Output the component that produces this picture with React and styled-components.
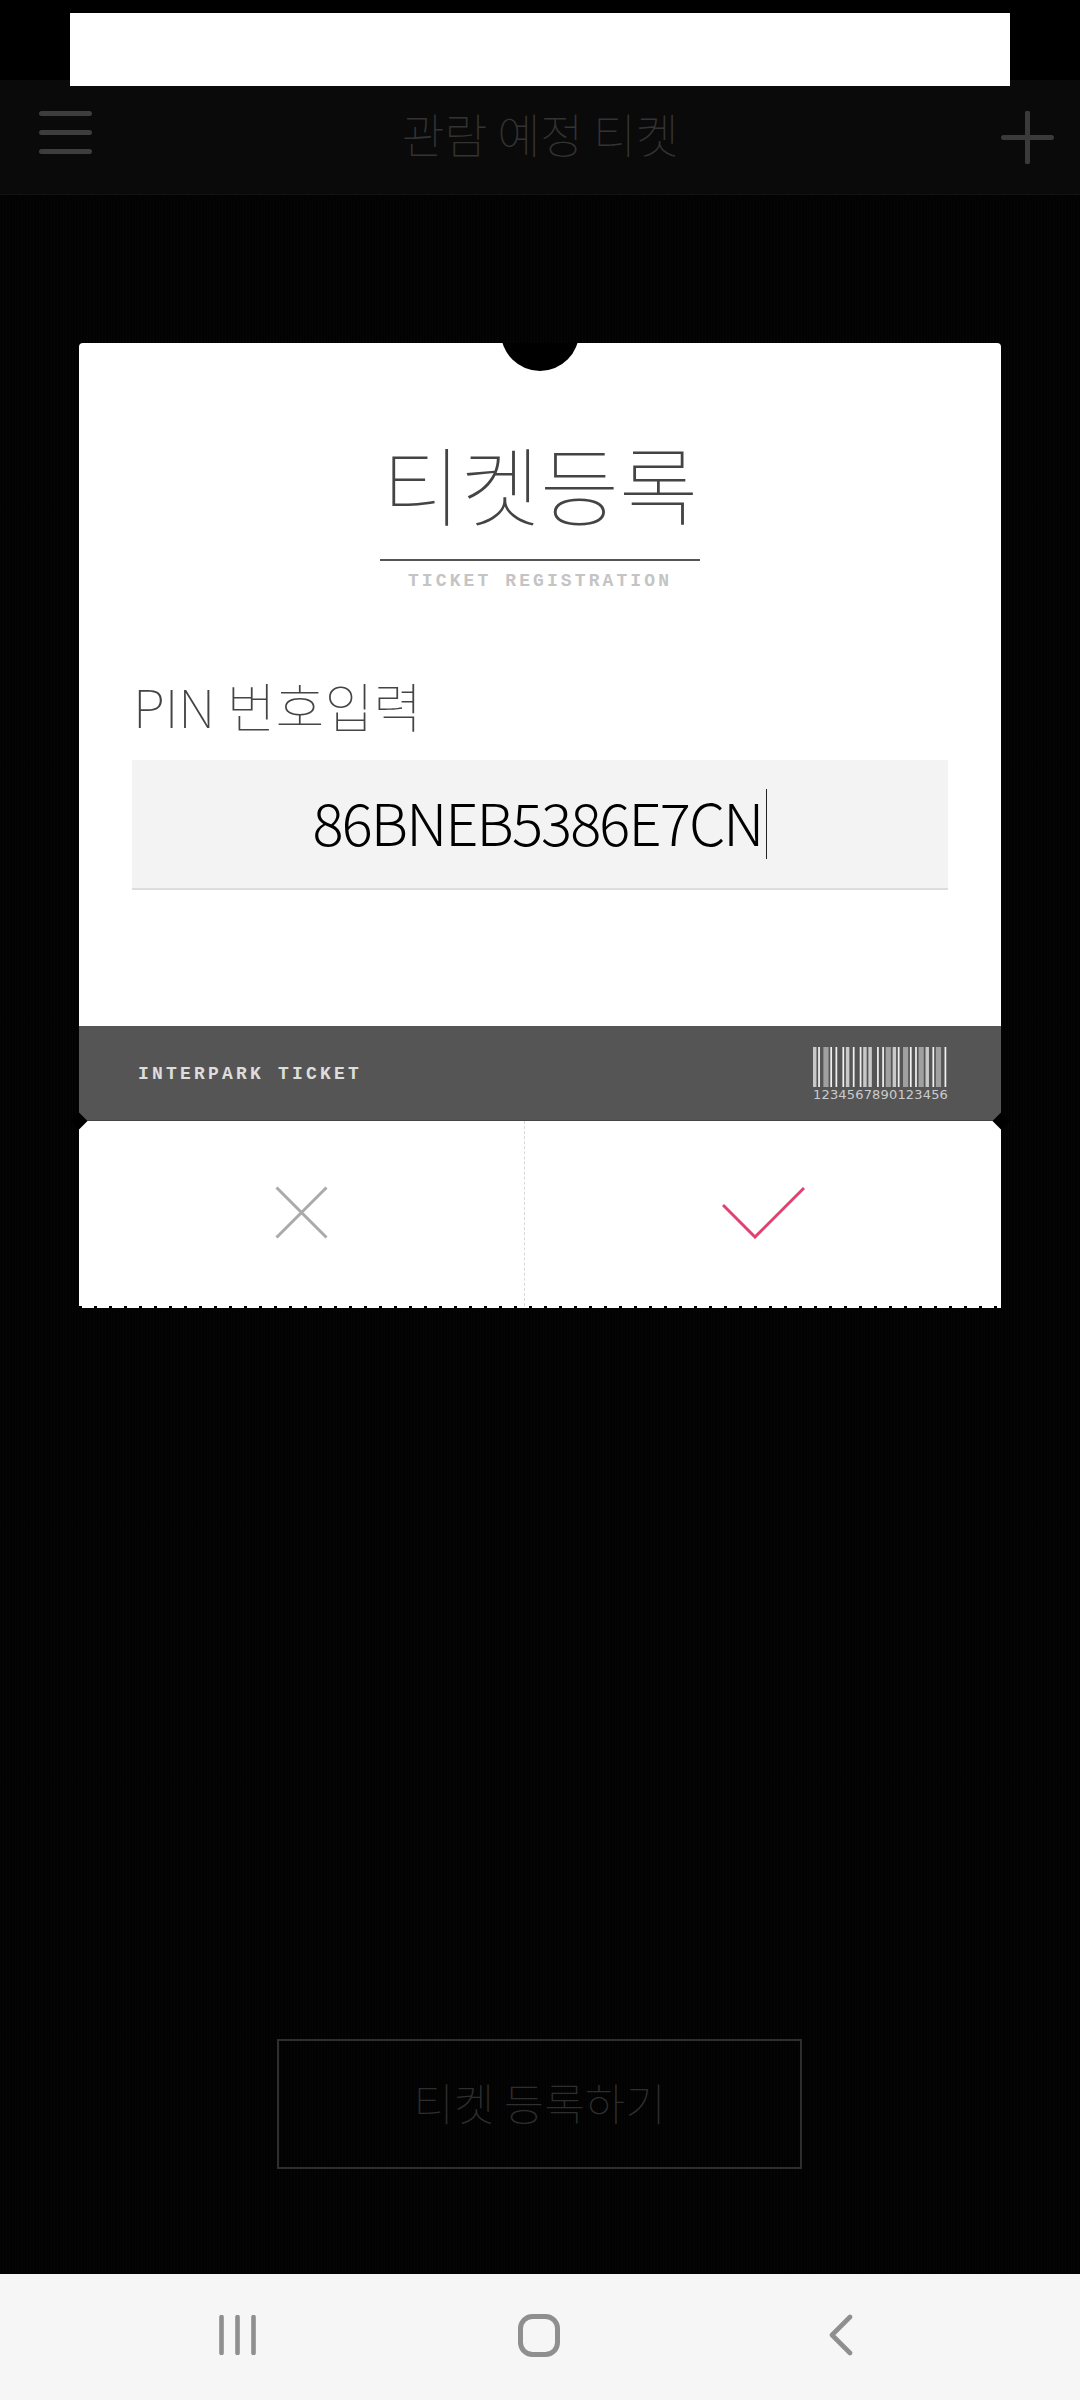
import styled, { createGlobalStyle } from "styled-components";

const GlobalStyle = createGlobalStyle`
  html, body {
    margin: 0;
    padding: 0;
    background: #000;
  }
  * {
    box-sizing: border-box;
  }
`;

const KR = `"Noto Sans CJK KR", "Noto Sans", sans-serif`;
const MONO = `"Liberation Mono", "DejaVu Sans Mono", monospace`;

const Page = styled.div`
  width: 1080px;
  height: 2400px;
  display: flex;
  flex-direction: column;
  overflow: hidden;
  background-color: #020202;
  background-image: repeating-linear-gradient(90deg, rgba(255, 255, 255, 0.012) 0 1px, transparent 1px 3px);
  font-family: ${KR};
`;

const StatusBar = styled.div`
  height: 80px;
  flex: none;
  padding: 13px 70px 0;
  background: #000;
`;

const StatusMask = styled.div`
  position: relative;
  z-index: 1;
  height: 73px;
  background: #fff;
`;

const Header = styled.header`
  height: 115px;
  flex: none;
  display: grid;
  grid-template-columns: 1fr auto 1fr;
  align-items: start;
  padding: 31px 39px 0;
  background: #0a0a0a;
  border-bottom: 1px solid #121212;
`;

const MenuIcon = styled.div`
  width: 53px;
  height: 43px;
  display: flex;
  flex-direction: column;
  justify-content: space-between;
`;

const MenuBar = styled.span`
  display: block;
  height: 5px;
  border-radius: 3px;
  background: #3d3d3d;
`;

const HeaderTitle = styled.h1`
  margin: -4px 0 0;
  font-size: 47px;
  line-height: 52px;
  font-weight: 100;
  color: #333;
  letter-spacing: -0.4px;
`;

const PlusSvg = styled.svg`
  justify-self: end;
  margin-right: -13px;
`;

const Ticket = styled.section`
  position: relative;
  width: 922px;
  margin: 148px 0 0 79px;
  flex: none;
`;

const TicketBody = styled.div`
  position: relative;
  height: 683px;
  padding: 90px 53px 0;
  background: #fff;
  border-radius: 4px 4px 0 0;
  overflow: hidden;
`;

const TopNotch = styled.div`
  position: absolute;
  top: -50px;
  left: 422px;
  width: 78px;
  height: 78px;
  border-radius: 50%;
  background: #000;
`;

const TitleBlock = styled.div`
  width: 320px;
  margin: 0 auto;
  text-align: center;
`;

const TicketTitle = styled.h2`
  margin: 0;
  height: 128px;
  font-size: 86px;
  line-height: 100px;
  font-weight: 100;
  color: #444;
  white-space: nowrap;
  border-bottom: 2px solid #555;
`;

const TitleSub = styled.div`
  margin-top: 12px;
  font-family: ${MONO};
  font-size: 18px;
  line-height: 16px;
  font-weight: 700;
  letter-spacing: 3.1px;
  color: #c4c4c4;
  white-space: nowrap;
`;

const PinLabel = styled.label`
  display: block;
  margin: 80px 0 0 1px;
  font-size: 53px;
  line-height: 72px;
  font-weight: 100;
  color: #444;
`;

const PinField = styled.div`
  height: 130px;
  margin-top: 19px;
  display: flex;
  align-items: center;
  justify-content: center;
  background: #f3f3f3;
  border-bottom: 2px solid #ddd;
  font-size: 58px;
  line-height: 70px;
  font-weight: 300;
  letter-spacing: -1.9px;
  color: #000;
`;

const PinValue = styled.span`
  margin-bottom: 6px;
`;

const Caret = styled.span`
  display: inline-block;
  width: 1px;
  height: 70px;
  margin-left: 4px;
  background: #222;
`;

const Band = styled.div`
  height: 95px;
  display: flex;
  align-items: center;
  justify-content: space-between;
  padding: 1px 53px 0 59px;
  background: #555;
  border-bottom: 1px solid #444;
`;

const BandLabel = styled.div`
  font-family: ${MONO};
  font-size: 18px;
  font-weight: 700;
  letter-spacing: 3.2px;
  color: #ddd;
  white-space: nowrap;
`;

const Barcode = styled.div`
  width: 135px;
  display: flex;
  flex-direction: column;
  gap: 2px;
`;

const BarcodeDigits = styled.div`
  display: flex;
  justify-content: space-between;
  font-family: "DejaVu Sans", sans-serif;
  font-size: 13px;
  line-height: 12px;
  color: #ccc;
`;

const Stub = styled.div`
  display: grid;
  grid-template-columns: 445px 1fr;
  height: 185px;
  background: #fff;
`;

const StubButton = styled.div`
  display: flex;
  align-items: center;
  justify-content: center;
  padding-bottom: 3px;
  ${({ $divided }) => $divided && "border-left: 1px dashed #d8d8d8;"}
`;

const Perforation = styled.div`
  height: 2px;
  background: repeating-linear-gradient(90deg, #000 0 3px, #fff 3px 15px);
`;

const SideNotch = styled.div`
  position: absolute;
  top: 772px;
  ${({ $side }) => $side}: -6px;
  width: 12px;
  height: 12px;
  background: #000;
  transform: rotate(45deg);
`;

const RegisterButton = styled.div`
  width: 525px;
  height: 130px;
  margin: 731px 0 0 277px;
  padding-bottom: 5px;
  flex: none;
  display: flex;
  align-items: center;
  justify-content: center;
  border: 2px solid #2e2e2e;
  font-size: 44px;
  font-weight: 100;
  color: #2e2e2e;
`;

const NavBar = styled.nav`
  height: 126px;
  margin-top: auto;
  flex: none;
  display: flex;
  align-items: center;
  justify-content: space-between;
  padding: 0 227px 4px 219px;
  background: #f6f6f6;
`;

const HomeSvg = styled.svg`
  margin-right: 8px;
`;

const BARS = [2,1,1,2,3,1,1,2,1,3,1,1,2,2,1,3,1,1,2,1,2,3,1,2,1,1,3,1,2,1,1,2,3,1,1,2,1,1,3,1,2,2,1,1,3,2,1,1];

function BarcodeBars() {
  let x = 0;
  const rects = [];
  BARS.forEach((w, i) => {
    if (i % 2 === 0) {
      rects.push(
        <rect key={i} x={x} y="0" width={w} height="40" fill={w === 1 ? "#f0f0f0" : w === 2 ? "#c8c8c8" : "#a0a0a0"} />
      );
    }
    x += w;
  });
  return (
    <svg width="135" height="40" viewBox={`0 0 ${x} 40`} preserveAspectRatio="none">
      {rects}
    </svg>
  );
}

function PlusIcon() {
  return (
    <PlusSvg width="53" height="53" viewBox="0 0 53 53">
      <path d="M26.5 2v49M2.5 26.5h48" stroke="#3a3a3a" strokeWidth="5" strokeLinecap="round" fill="none" />
    </PlusSvg>
  );
}

function CloseIcon() {
  return (
    <svg width="53" height="53" viewBox="0 0 53 53">
      <path d="M1.5 1.5l50 50M51.5 1.5l-50 50" stroke="#aaa" strokeWidth="3" fill="none" />
    </svg>
  );
}

function CheckIcon() {
  return (
    <svg width="83" height="53" viewBox="0 0 83 53">
      <path d="M1 19l32 32L82 2" stroke="#e0416f" strokeWidth="3" fill="none" />
    </svg>
  );
}

function RecentsIcon() {
  return (
    <svg width="37" height="40" viewBox="0 0 37 40">
      <path d="M2.5 2v36M18.5 2v36M34.5 2v36" stroke="#8f8f8f" strokeWidth="4.6" strokeLinecap="round" fill="none" />
    </svg>
  );
}

function HomeIcon() {
  return (
    <HomeSvg width="42" height="43" viewBox="0 0 42 43">
      <rect x="2.5" y="2.5" width="37" height="38" rx="12" stroke="#8f8f8f" strokeWidth="5" fill="none" />
    </HomeSvg>
  );
}

function BackIcon() {
  return (
    <svg width="24" height="42" viewBox="0 0 24 42">
      <path d="M21 3L3 21l18 18" stroke="#8f8f8f" strokeWidth="4.6" strokeLinecap="round" strokeLinejoin="round" fill="none" />
    </svg>
  );
}

export default function App() {
  return (
    <>
      <GlobalStyle />
      <Page>
        <StatusBar>
          <StatusMask />
        </StatusBar>
        <Header>
          <MenuIcon>
            <MenuBar />
            <MenuBar />
            <MenuBar />
          </MenuIcon>
          <HeaderTitle>관람 예정 티켓</HeaderTitle>
          <PlusIcon />
        </Header>
        <Ticket>
          <TicketBody>
            <TopNotch />
            <TitleBlock>
              <TicketTitle>티켓등록</TicketTitle>
              <TitleSub>TICKET REGISTRATION</TitleSub>
            </TitleBlock>
            <PinLabel>PIN 번호입력</PinLabel>
            <PinField>
              <PinValue>86BNEB5386E7CN</PinValue>
              <Caret />
            </PinField>
          </TicketBody>
          <Band>
            <BandLabel>INTERPARK TICKET</BandLabel>
            <Barcode>
              <BarcodeBars />
              <BarcodeDigits>
                {"1234567890123456".split("").map((d, i) => (
                  <span key={i}>{d}</span>
                ))}
              </BarcodeDigits>
            </Barcode>
          </Band>
          <Stub>
            <StubButton>
              <CloseIcon />
            </StubButton>
            <StubButton $divided>
              <CheckIcon />
            </StubButton>
          </Stub>
          <Perforation />
          <SideNotch $side="left" />
          <SideNotch $side="right" />
        </Ticket>
        <RegisterButton>티켓 등록하기</RegisterButton>
        <NavBar>
          <RecentsIcon />
          <HomeIcon />
          <BackIcon />
        </NavBar>
      </Page>
    </>
  );
}
